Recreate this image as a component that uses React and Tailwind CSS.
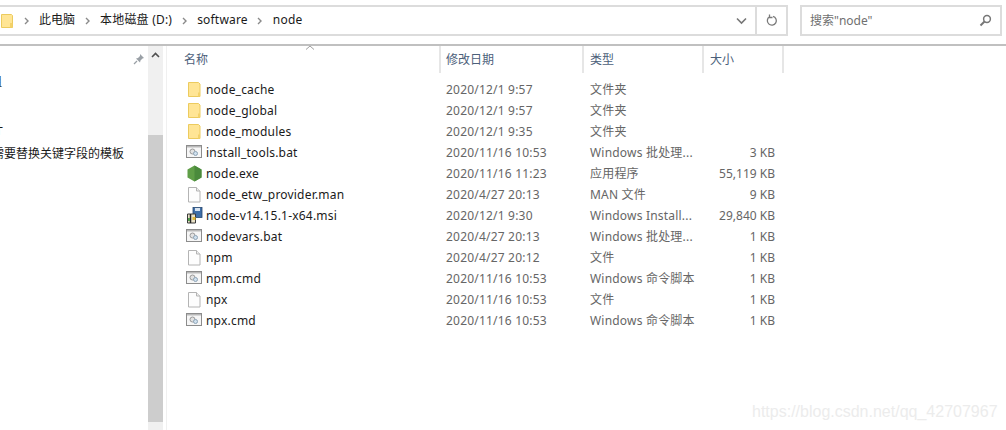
import React from "react";

const files = [
  { name: "node_cache", date: "2020/12/1 9:57", type: "文件夹", size: "", icon: "folder" },
  { name: "node_global", date: "2020/12/1 9:57", type: "文件夹", size: "", icon: "folder" },
  { name: "node_modules", date: "2020/12/1 9:35", type: "文件夹", size: "", icon: "folder" },
  { name: "install_tools.bat", date: "2020/11/16 10:53", type: "Windows 批处理...", size: "3 KB", icon: "bat" },
  { name: "node.exe", date: "2020/11/16 11:23", type: "应用程序", size: "55,119 KB", icon: "node" },
  { name: "node_etw_provider.man", date: "2020/4/27 20:13", type: "MAN 文件", size: "9 KB", icon: "file" },
  { name: "node-v14.15.1-x64.msi", date: "2020/12/1 9:30", type: "Windows Install...", size: "29,840 KB", icon: "msi" },
  { name: "nodevars.bat", date: "2020/4/27 20:13", type: "Windows 批处理...", size: "1 KB", icon: "bat" },
  { name: "npm", date: "2020/4/27 20:12", type: "文件", size: "1 KB", icon: "file" },
  { name: "npm.cmd", date: "2020/11/16 10:53", type: "Windows 命令脚本", size: "1 KB", icon: "bat" },
  { name: "npx", date: "2020/11/16 10:53", type: "文件", size: "1 KB", icon: "file" },
  { name: "npx.cmd", date: "2020/11/16 10:53", type: "Windows 命令脚本", size: "1 KB", icon: "bat" },
];

const FolderIcon = () => (
  <svg width="18" height="17" viewBox="0 0 18 17">
    <path d="M3.500 1.500h10l1.500 1.500v12.500h-11.500z" fill="#ffe595" stroke="#eccb5e" />
    <path d="M13 11.500h2v4h-2z" fill="#f3d26a" />
  </svg>
);

const FileIcon = () => (
  <svg width="18" height="17" viewBox="0 0 18 17">
    <path d="M3.500 1.500h8l3.500 3.500v11h-11.500z" fill="#fdfdfd" stroke="#b4b4b4" />
    <path d="M11.500 1.500v3.500h3.500" fill="#eeeeee" stroke="#b4b4b4" />
  </svg>
);

const BatIcon = () => (
  <svg width="18" height="17" viewBox="0 0 18 17">
    <rect x="1.500" y="1.500" width="15" height="12" fill="#f6f6f6" stroke="#8c8c8c" />
    <rect x="2" y="2" width="14" height="1.500" fill="#b9b9b9" />
    <circle cx="7.500" cy="7.500" r="2.500" fill="#e2e2e2" stroke="#9a9a9a" />
    <circle cx="10.500" cy="9.500" r="2" fill="#cfe0ee" stroke="#8ea4b6" />
  </svg>
);

const NodeIcon = () => (
  <svg width="18" height="17" viewBox="0 0 18 17">
    <path d="M9.500 .5l7 4v8l-7 4-7-4v-8z" fill="#5f9e47" />
    <path d="M9.500 .5l7 4v8l-7 4z" fill="#4a8a3c" />
  </svg>
);

const MsiIcon = () => (
  <svg width="18" height="17" viewBox="0 0 18 17">
    <rect x="8" y="0.500" width="9" height="10" fill="#3f6fa8" stroke="#26476f" strokeWidth="0.800" />
    <rect x="10" y="1" width="5" height="3" fill="#d7e3f0" />
    <path d="M2.500 7h8v9h-8z" fill="#e9e2c8" stroke="#3b3b3b" />
    <path d="M5.500 7v9" stroke="#222222" strokeWidth="1.500" />
    <rect x="7.500" y="10" width="3" height="3" fill="#e2b93b" />
    <rect x="3" y="11" width="2" height="3" fill="#4f9a4a" />
  </svg>
);

function FileTypeIcon({ icon }) {
  if (icon === "folder") return <FolderIcon />;
  if (icon === "bat") return <BatIcon />;
  if (icon === "node") return <NodeIcon />;
  if (icon === "msi") return <MsiIcon />;
  return <FileIcon />;
}

const Chevron = () => (
  <svg width="6" height="8" viewBox="0 0 6 8" className="mx-[9.5px]">
    <path d="M1 1l3 3-3 3" fill="none" stroke="#8a8a8a" strokeWidth="1.400" />
  </svg>
);

const HeaderCell = ({ className, children }) => (
  <div className={`h-[27px] pt-[4px] border-r-2 border-[#e6e6e6] text-[#4c607a] ${className}`}>
    {children}
  </div>
);

export default function App() {
  return (
    <div
      className="relative w-[1006px] h-[430px] overflow-hidden bg-white text-[12px] leading-[20px] text-[#1a1a1a]"
      style={{ fontFamily: '"Noto Sans", "Noto Sans CJK SC", sans-serif' }}
    >
      {/* address + search */}
      <div className="h-[46px] border-b-2 border-[#c0c0c0] pt-[5px] flex items-start">
        <div className="w-[788px] h-[31px] border-y-2 border-r-2 border-[#dcdcdc] flex items-center">
          <svg width="14" height="16" viewBox="0 0 14 16">
            <path d="M1.500 1.500h10l1 1v12h-11z" fill="#ffe595" stroke="#eccb5e" />
            <rect x="10" y="10" width="2.500" height="4.500" fill="#f3d26a" />
          </svg>
          <Chevron />
          <span className="mb-[1px]">此电脑</span>
          <Chevron />
          <span className="mb-[1px] tracking-[0.2px]">本地磁盘 (D:)</span>
          <Chevron />
          <span className="mb-[1px] tracking-[0.2px]">software</span>
          <Chevron />
          <span className="mb-[1px] tracking-[0.2px]">node</span>
          <div className="ml-auto w-[38px] h-full flex items-center justify-end pr-[9px] mr-[-1px]">
            <svg width="11" height="8" viewBox="0 0 11 8">
              <path d="M1 1.500l4.500 4.500 4.500-4.500" fill="none" stroke="#777777" strokeWidth="1.600" />
            </svg>
          </div>
          <div className="w-[31px] h-full border-l-2 border-[#dcdcdc] flex items-center justify-center">
            <svg width="12" height="13" viewBox="0 0 12 13">
              <path d="M3.500 2.800a4.500 4.500 0 1 0 3.500-.5M3.500 .5v3h3" fill="none" stroke="#7a7a7a" strokeWidth="1.300" />
            </svg>
          </div>
        </div>
        <div className="ml-[12px] w-[202px] h-[31px] border-2 border-[#dcdcdc] flex items-center pl-[8px] pr-[8px] text-[#707070]">
          <span>搜索"node"</span>
          <svg width="13" height="13" viewBox="0 0 13 13" className="ml-auto">
            <circle cx="8" cy="5" r="3.400" fill="none" stroke="#777777" strokeWidth="1.500" />
            <path d="M5.500 7.500l-4 4" stroke="#777777" strokeWidth="2" />
          </svg>
        </div>
      </div>

      <div className="flex h-[384px]">
        {/* nav pane */}
        <div className="w-[148px] relative overflow-hidden">
          <svg width="12" height="12" viewBox="0 0 12 12" className="absolute left-[133px] top-[7px]">
            <path d="M7 1l4 4-1.500.5-2 2-.5 2-4-4 2-.5 2-2z" fill="#9aa0a6" />
            <path d="M4 8l-3 3" stroke="#9aa0a6" strokeWidth="1.200" />
          </svg>
          <div className="pt-[26px] whitespace-nowrap">
            <div className="h-[24px] ml-[-10px]">组</div>
            <div className="h-[24px]" />
            <div className="h-[24px] ml-[-9px]">计</div>
            <div className="h-[24px] ml-[-8px]">需要替换关键字段的模板</div>
          </div>
        </div>
        {/* scrollbar */}
        <div className="w-[15px] h-full bg-[#f0f0f0] flex flex-col">
          <div className="h-[89px] pt-[6px] flex justify-center items-start">
            <svg width="9" height="6" viewBox="0 0 9 6">
              <path d="M1 5l3.500-3.500 3.500 3.500" fill="none" stroke="#505050" strokeWidth="1.600" />
            </svg>
          </div>
          <div className="h-[287px] bg-[#cdcdcd]" />
        </div>
        <div className="w-[3px]" />
        <div className="w-[1px] bg-[#f0f0f0] h-full" />

        {/* file list */}
        <div className="flex-1 relative pl-[16px]">
          <svg width="10" height="5" viewBox="0 0 10 5" className="absolute left-[138px] top-[-1px]">
            <path d="M1 4.500l4-3.500 4 3.500" fill="none" stroke="#a0a0a0" />
          </svg>
          <div className="flex">
            <HeaderCell className="w-[258px] pl-[1px]">名称</HeaderCell>
            <HeaderCell className="w-[143px] pl-[5px]">修改日期</HeaderCell>
            <HeaderCell className="w-[120px] pl-[6px]">类型</HeaderCell>
            <HeaderCell className="w-[80px] pl-[6px]">大小</HeaderCell>
          </div>
          <div className="pt-[6px]">
            {files.map((f) => (
              <div key={f.name} className="flex h-[21px] items-center">
                <div className="w-[258px] pl-[2px] flex items-center gap-[3px]">
                  <FileTypeIcon icon={f.icon} />
                  <span className="tracking-[0.2px]">{f.name}</span>
                </div>
                <div className="w-[143px] pl-[5px] text-[#666666] tracking-[0.2px]">{f.date}</div>
                <div className="w-[120px] pl-[6px] text-[#666666] whitespace-nowrap tracking-[0.2px]">{f.type}</div>
                <div className="w-[80px] pr-[9px] text-right text-[#666666]">{f.size}</div>
              </div>
            ))}
          </div>
        </div>
      </div>

      {/* watermark */}
      <div
        className="absolute left-[752px] top-[402px] text-[16px] leading-[20px] text-[#ececec]"
        style={{ fontFamily: '"Liberation Sans", sans-serif' }}
      >
        https://blog.csdn.net/qq_42707967
      </div>
    </div>
  );
}
